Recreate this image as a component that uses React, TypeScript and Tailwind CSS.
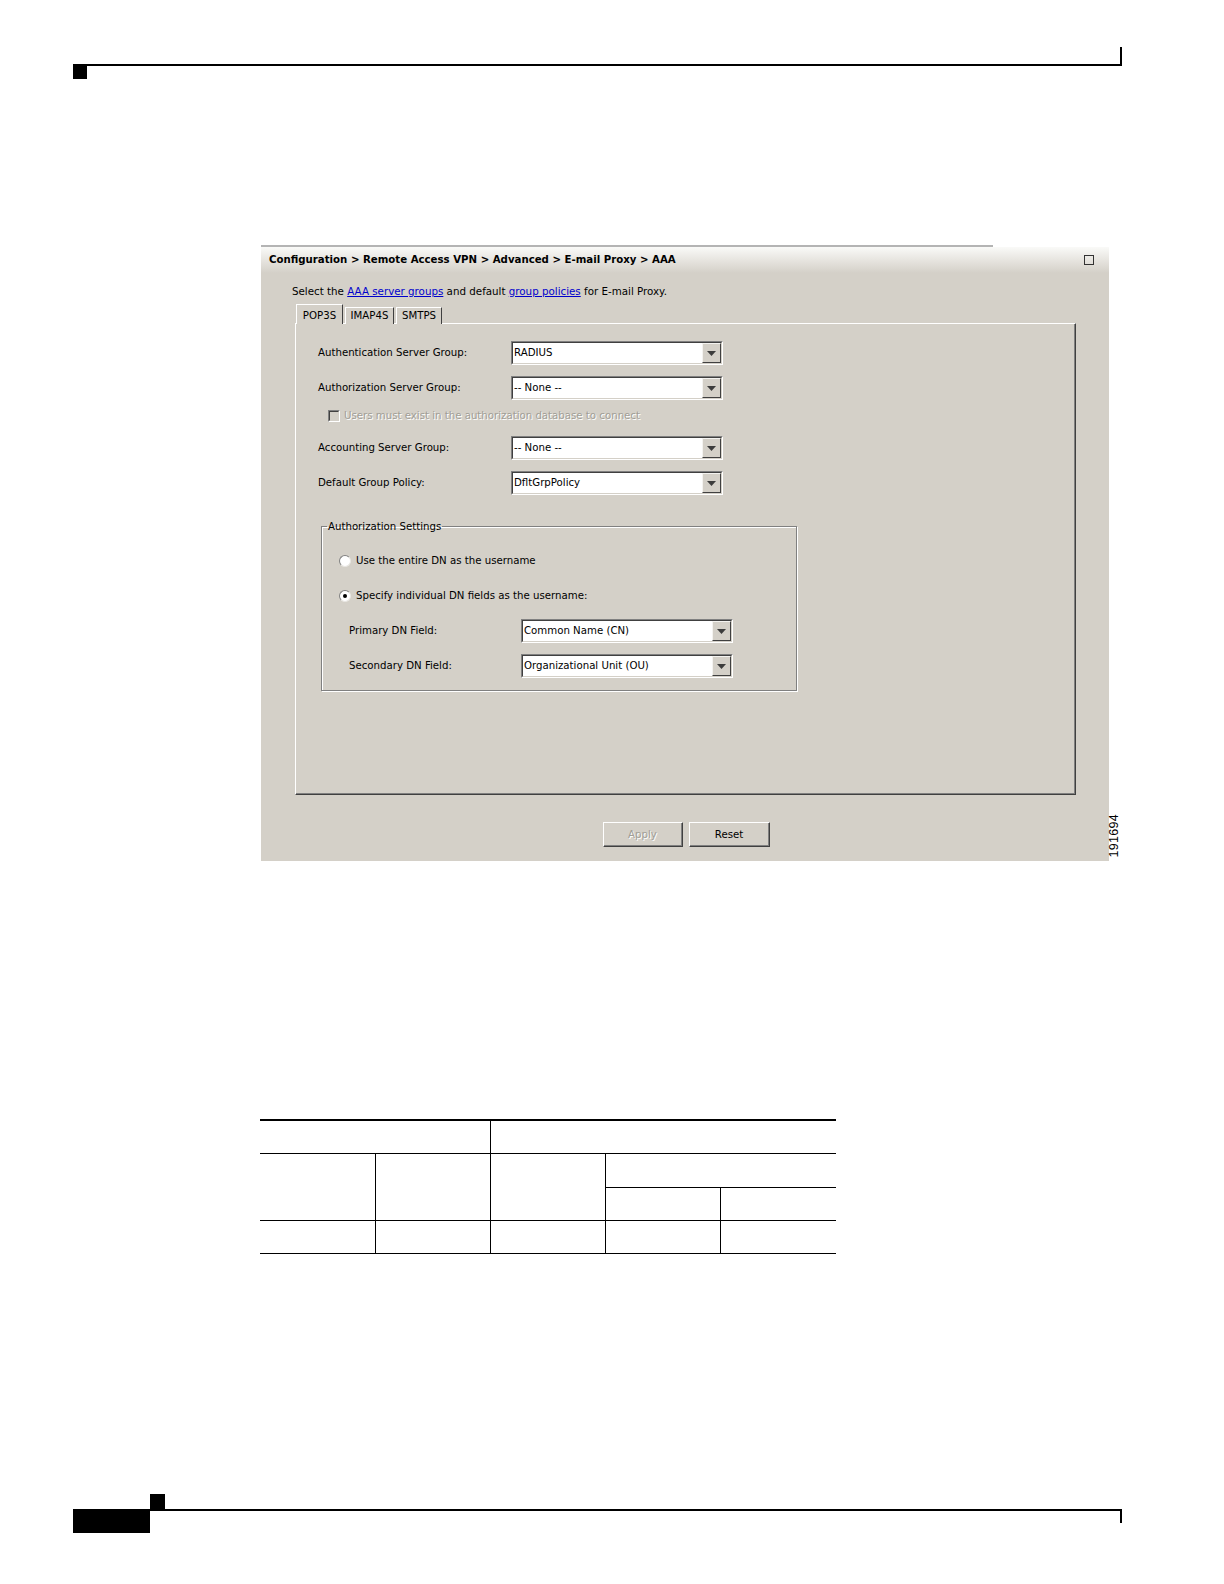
import React from 'react';

const FACE = 'bg-[#d4d0c8]';

function Combo({ value }: { value: string }) {
  return (
    <div className="w-[212px] h-[24px] flex border border-t-[#808080] border-l-[#808080] border-r-white border-b-white">
      <div className="flex-1 flex bg-white border border-t-[#404040] border-l-[#404040] border-r-[#d4d0c8] border-b-[#d4d0c8]">
        <span className="flex-1 pl-px leading-[20px] whitespace-nowrap">{value}</span>
        <div className={`w-[19px] h-full ${FACE} flex items-center justify-center border border-t-[#f4f3f0] border-l-[#f4f3f0] border-r-[#404040] border-b-[#404040]`}>
          <svg width="9" height="5" viewBox="0 0 9 5">
            <path d="M0 0 H9 L4.5 5 Z" fill="#3c3c3c" />
          </svg>
        </div>
      </div>
    </div>
  );
}

function Row({ label, value, labelW = 'w-[193px]' }: { label: string; value: string; labelW?: string }) {
  return (
    <div className="flex items-center h-[24px]">
      <span className={`${labelW} whitespace-nowrap`}>{label}</span>
      <Combo value={value} />
    </div>
  );
}

function Radio({ checked, label }: { checked?: boolean; label: string }) {
  return (
    <div className="flex items-center h-[13px] gap-[5px]">
      <div className="w-[12px] h-[12px] rounded-full bg-white border border-t-[#808080] border-l-[#808080] border-r-[#e8e6e2] border-b-[#e8e6e2] flex items-center justify-center">
        {checked && <div className="w-[4px] h-[4px] rounded-full bg-black" />}
      </div>
      <span className="whitespace-nowrap">{label}</span>
    </div>
  );
}

function Button({ label, disabled, w }: { label: string; disabled?: boolean; w: string }) {
  return (
    <div
      className={`${w} h-[25px] ${FACE} flex items-center justify-center border border-t-white border-l-white border-r-[#404040] border-b-[#404040] shadow-[inset_-1px_-1px_0_#808080] ${
        disabled ? 'text-[#a19e96] [text-shadow:1px_1px_0_#fff]' : 'text-black'
      }`}
    >
      {label}
    </div>
  );
}

export default function App() {
  return (
    <div className="w-[1224px] h-[1584px] bg-white flex flex-col overflow-hidden">
      {/* page header rule */}
      <div className="ml-[73px] mt-[47px] w-[1049px] h-[19px] border-b-2 border-r-2 border-black" />
      <div className="ml-[73px] w-[14px] h-[13px] bg-black" />

      {/* screenshot */}
      <div className="mt-[166px] ml-[261px] flex items-end">
        <div className="w-[848px] flex flex-col">
          <div className="h-[2px] w-[732px] bg-[#b4b4b4]" />
          <div className={`h-[614px] ${FACE} flex flex-col text-[10.2px] text-black font-['DejaVu_Sans',Verdana,sans-serif]`}>
            <div className="h-[26px] bg-gradient-to-b from-[#fafaf8] to-[#d4d0c8] flex items-center justify-between pl-[8px] pr-[15px]">
              <span className="font-bold text-[10.2px] whitespace-nowrap">
                Configuration &gt; Remote Access VPN &gt; Advanced &gt; E-mail Proxy &gt; AAA
              </span>
              <div className="w-[10px] h-[10px] border-[1.5px] border-[#333]" />
            </div>

            <div className="mt-[12px] ml-[31px] leading-[13px] whitespace-nowrap text-[10.3px]">
              Select the <span className="text-[#0000cc] underline">AAA server groups</span> and default{' '}
              <span className="text-[#0000cc] underline">group policies</span> for E-mail Proxy.
            </div>

            {/* tabs */}
            <div className="mt-[6px] ml-[35px] flex items-end gap-[2px] -mb-px relative z-10">
              <div className={`w-[47px] h-[20px] ${FACE} border-t border-l border-r border-t-white border-l-white border-r-[#404040] flex items-start justify-center pt-[3px]`}>
                POP3S
              </div>
              <div className={`w-[49px] h-[17px] ${FACE} border-t border-l border-r border-t-white border-l-white border-r-[#404040] flex items-center justify-center`}>
                IMAP4S
              </div>
              <div className={`w-[46px] h-[17px] ${FACE} border-t border-l border-r border-t-white border-l-white border-r-[#404040] flex items-center justify-center`}>
                SMTPS
              </div>
            </div>

            <div className="ml-[34px] w-[781px] h-[472px] border border-t-white border-l-white border-r-[#404040] border-b-[#404040] shadow-[inset_-1px_-1px_0_#808080] pl-[22px] pt-[17px] flex flex-col">
              <Row label="Authentication Server Group:" value="RADIUS" />
              <div className="mt-[11px]">
                <Row label="Authorization Server Group:" value="-- None --" />
              </div>
              <div className="mt-[9px] ml-[10px] flex items-center h-[13px] gap-[4px] text-[#a19e96] [text-shadow:1px_1px_0_#fff]">
                <div className="w-[12px] h-[12px] border border-t-[#808080] border-l-[#808080] border-r-white border-b-white">
                  <div className="w-full h-full border border-t-[#404040] border-l-[#404040] border-r-[#d4d0c8] border-b-[#d4d0c8]" />
                </div>
                <span className="whitespace-nowrap">Users must exist in the authorization database to connect</span>
              </div>
              <div className="mt-[14px]">
                <Row label="Accounting Server Group:" value="-- None --" />
              </div>
              <div className="mt-[11px]">
                <Row label="Default Group Policy:" value="DfltGrpPolicy" />
              </div>

              <fieldset className="mt-[25px] ml-[3px] w-[476px] border border-[#808080] shadow-[inset_1px_1px_0_#fff,1px_1px_0_#fff] pl-[17px] pb-[12px]">
                <legend className="-ml-[12px] px-px leading-[13px]">Authorization Settings</legend>
                <div className="mt-[21px]">
                  <Radio label="Use the entire DN as the username" />
                </div>
                <div className="mt-[22px]">
                  <Radio checked label="Specify individual DN fields as the username:" />
                </div>
                <div className="mt-[17px] ml-[10px]">
                  <Row label="Primary DN Field:" value="Common Name (CN)" labelW="w-[172px]" />
                </div>
                <div className="mt-[11px] ml-[10px]">
                  <Row label="Secondary DN Field:" value="Organizational Unit (OU)" labelW="w-[172px]" />
                </div>
              </fieldset>
            </div>

            <div className="mt-[27px] flex justify-center gap-[6px] pl-[2px]">
              <Button label="Apply" disabled w="w-[80px]" />
              <Button label="Reset" w="w-[81px]" />
            </div>
          </div>
        </div>
        <div className="-ml-px mb-[3px] [writing-mode:vertical-rl] rotate-180 text-[12.5px] leading-[13px] text-black tracking-[0.3px] font-['Liberation_Sans',Arial,sans-serif]">
          191694
        </div>
      </div>

      {/* empty table */}
      <table className="mt-[258px] ml-[260px] w-[576px] border-collapse border-t-2 border-black table-fixed">
        <tbody>
          <tr className="h-[33px]">
            <td colSpan={2} className="border-b border-black" />
            <td colSpan={3} className="border-b border-l border-black" />
          </tr>
          <tr className="h-[34px]">
            <td rowSpan={2} className="w-[115px] border-b border-black" />
            <td rowSpan={2} className="w-[115px] border-b border-l border-black" />
            <td rowSpan={2} className="w-[116px] border-b border-l border-black" />
            <td colSpan={2} className="border-b border-l border-black" />
          </tr>
          <tr className="h-[33px]">
            <td className="w-[115px] border-b border-l border-black" />
            <td className="w-[115px] border-b border-l border-black" />
          </tr>
          <tr className="h-[33px]">
            <td className="border-b border-black" />
            <td className="border-b border-l border-black" />
            <td className="border-b border-l border-black" />
            <td className="border-b border-l border-black" />
            <td className="border-b border-l border-black" />
          </tr>
        </tbody>
      </table>

      {/* page footer rule */}
      <div className="mt-[240px] ml-[150px] w-[15px] h-[15px] bg-black" />
      <div className="ml-[73px] flex">
        <div className="w-[77px] h-[24px] bg-black" />
        <div className="w-[972px] h-[14px] border-t-2 border-r-2 border-black" />
      </div>
    </div>
  );
}
